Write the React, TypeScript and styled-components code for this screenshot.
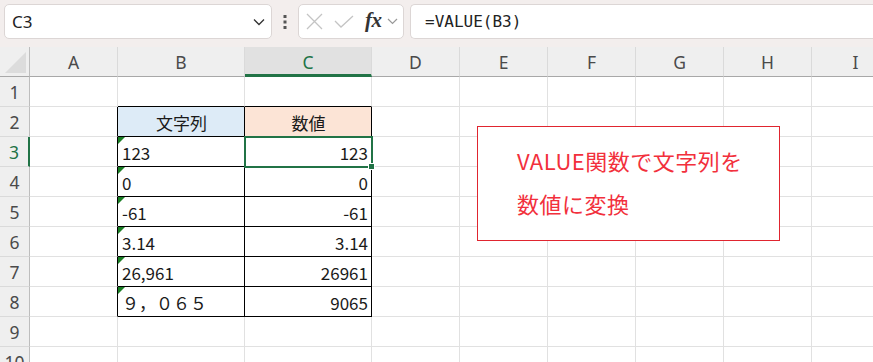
import styled, { createGlobalStyle, css } from 'styled-components';

const GlobalStyle = createGlobalStyle`
  html, body {
    margin: 0;
    padding: 0;
    background: #ffffff;
    overflow: hidden;
  }
  body {
    font-family: "Noto Sans", "Noto Sans CJK JP", sans-serif;
  }
`;

const COLS = ['A', 'B', 'C', 'D', 'E', 'F', 'G', 'H', 'I'];
const WIDTHS = [88, 127, 127, 88, 88, 88, 88, 88, 88];
const ROWS = [1, 2, 3, 4, 5, 6, 7, 8, 9, 10];
const GREEN = '#217346';

type CellData = { text: string; align: 'left' | 'center' | 'right'; fill?: string; flag?: boolean };

const data: Record<string, CellData> = {
  B2: { text: '文字列', align: 'center', fill: '#ddebf7' },
  C2: { text: '数値', align: 'center', fill: '#fce4d6' },
  B3: { text: '123', align: 'left', flag: true },
  C3: { text: '123', align: 'right' },
  B4: { text: '0', align: 'left', flag: true },
  C4: { text: '0', align: 'right' },
  B5: { text: '-61', align: 'left', flag: true },
  C5: { text: '-61', align: 'right' },
  B6: { text: '3.14', align: 'left', flag: true },
  C6: { text: '3.14', align: 'right' },
  B7: { text: '26,961', align: 'left', flag: true },
  C7: { text: '26961', align: 'right' },
  B8: { text: '９，０６５', align: 'left', flag: true },
  C8: { text: '9065', align: 'right' },
};

const inTable = (col: string, row: number) => (col === 'B' || col === 'C') && row >= 2 && row <= 8;

function App() {
  return (
    <>
      <GlobalStyle />
      <Page>
        <TopBar>
          <NameBox>
            <NameText>C3</NameText>
            <svg width="12" height="8" viewBox="0 0 12 8">
              <path d="M1 1.5 L6 6.5 L11 1.5" fill="none" stroke="#333" strokeWidth="1.3" />
            </svg>
          </NameBox>
          <Dots>
            <svg width="4" height="14" viewBox="0 0 4 14">
              <rect x="0.5" y="0" width="3" height="3" fill="#555" />
              <rect x="0.5" y="5.5" width="3" height="3" fill="#555" />
              <rect x="0.5" y="11" width="3" height="3" fill="#555" />
            </svg>
          </Dots>
          <FuncBox>
            <svg width="17" height="17" viewBox="0 0 17 17">
              <path d="M1 1 L16 16 M16 1 L1 16" stroke="#c4c4c4" strokeWidth="1.3" fill="none" />
            </svg>
            <svg width="20" height="13" viewBox="0 0 20 13">
              <path d="M1 6 L7 12 L19 1" stroke="#c4c4c4" strokeWidth="1.3" fill="none" />
            </svg>
            <Fx>fx</Fx>
            <svg width="11" height="7" viewBox="0 0 11 7">
              <path d="M1 1 L5.5 5.5 L10 1" fill="none" stroke="#999" strokeWidth="1.2" />
            </svg>
          </FuncBox>
          <FormulaBox>=VALUE(B3)</FormulaBox>
        </TopBar>

        <Sheet>
          <Corner>
            <CornerMark />
          </Corner>
          {COLS.map((c) => (
            <ColHead key={c} $active={c === 'C'}>
              {c}
            </ColHead>
          ))}
          {ROWS.map((r) => (
            <Row key={r}>
              <RowHead $active={r === 3}>{r}</RowHead>
              {COLS.map((c) => {
                const d = data[`${c}${r}`];
                const rightBlack = (c === 'A' && r >= 2 && r <= 8) || inTable(c, r);
                const bottomBlack = (c === 'B' || c === 'C') && r >= 1 && r <= 8;
                const selected = c === 'C' && r === 3;
                return (
                  <Cell
                    key={c}
                    $align={d?.align ?? 'left'}
                    $fill={d?.fill}
                    $rb={rightBlack}
                    $bb={bottomBlack}
                    $flag={!!d?.flag}
                    $selected={selected}
                  >
                    {d?.text}
                    {selected && <Handle />}
                  </Cell>
                );
              })}
            </Row>
          ))}

          <Shape>
            <ShapeText>
              VALUE関数で文字列を
              <br />
              数値に変換
            </ShapeText>
          </Shape>
        </Sheet>
      </Page>
    </>
  );
}

export default App;

const Page = styled.div`
  width: 873px;
  height: 362px;
  overflow: hidden;
  background: #ffffff;
`;

const TopBar = styled.div`
  height: 47px;
  box-sizing: border-box;
  padding: 4px 0 0 4px;
  background: #f3eeed;
  display: flex;
  align-items: flex-start;
`;

const boxBase = css`
  height: 35px;
  box-sizing: border-box;
  background: #ffffff;
  border: 1px solid #dcd6d5;
  border-radius: 5px;
  display: flex;
  align-items: center;
`;

const NameBox = styled.div`
  ${boxBase};
  width: 268px;
  padding: 0 6px 0 7px;
  justify-content: space-between;
`;

const NameText = styled.span`
  font-family: "Noto Sans", sans-serif;
  font-size: 17px;
  color: #222;
`;

const Dots = styled.div`
  width: 26px;
  height: 35px;
  display: flex;
  align-items: center;
  justify-content: center;
`;

const FuncBox = styled.div`
  ${boxBase};
  width: 106px;
  padding: 0 0 0 7px;

  & > svg:nth-child(1) {
    margin-right: 11px;
  }
  & > svg:nth-child(2) {
    margin-right: 11px;
  }
`;

const Fx = styled.span`
  font-family: "Liberation Serif", "DejaVu Serif", serif;
  font-style: italic;
  font-weight: bold;
  font-size: 21px;
  line-height: 1;
  color: #333;
  margin: -3px 5px 0 0;
  letter-spacing: -0.5px;
`;

const FormulaBox = styled.div`
  ${boxBase};
  flex: 1;
  margin-left: 6px;
  border-right: none;
  border-radius: 5px 0 0 5px;
  padding-left: 14px;
  font-family: "DejaVu Sans Mono", "Liberation Mono", monospace;
  font-size: 16px;
  color: #222;
`;

const Sheet = styled.div`
  position: relative;
  display: grid;
  grid-template-columns: 30px ${WIDTHS.map((w) => `${w}px`).join(' ')};
  grid-auto-rows: 30px;
`;

const Row = styled.div`
  display: contents;
`;

const headBase = css`
  box-sizing: border-box;
  background: #efefef;
  display: flex;
  align-items: center;
  justify-content: center;
  font-family: "Noto Sans", sans-serif;
  font-size: 17.5px;
  color: #4a4a4a;
`;

const Corner = styled.div`
  ${headBase};
  position: relative;
  border-right: 1px solid #bdbdbd;
  border-bottom: 1px solid #a8a8a8;
`;

const CornerMark = styled.div`
  position: absolute;
  right: 3px;
  bottom: 3px;
  width: 0;
  height: 0;
  border-left: 21px solid transparent;
  border-bottom: 21px solid #dcdcdc;
`;

const ColHead = styled.div<{ $active: boolean }>`
  ${headBase};
  padding-top: ${(p) => (p.$active ? '3px' : '1px')};
  border-right: 1px solid #dadada;
  border-bottom: ${(p) => (p.$active ? `3px solid ${GREEN}` : '1px solid #a8a8a8')};
  ${(p) =>
    p.$active &&
    css`
      background: #e1e1e1;
      color: ${GREEN};
    `}
`;

const RowHead = styled.div<{ $active: boolean }>`
  ${headBase};
  border-bottom: 1px solid #dadada;
  border-right: ${(p) => (p.$active ? `2px solid ${GREEN}` : '1px solid #bdbdbd')};
  ${(p) =>
    p.$active &&
    css`
      color: ${GREEN};
    `}
`;

const Cell = styled.div<{
  $align: 'left' | 'center' | 'right';
  $fill?: string;
  $rb: boolean;
  $bb: boolean;
  $flag: boolean;
  $selected: boolean;
}>`
  position: relative;
  box-sizing: border-box;
  display: flex;
  align-items: center;
  justify-content: ${(p) =>
    p.$align === 'center' ? 'center' : p.$align === 'right' ? 'flex-end' : 'flex-start'};
  padding: 2px 3px 0 4px;
  background: ${(p) => p.$fill ?? '#ffffff'};
  border-right: 1px solid ${(p) => (p.$rb ? '#000000' : '#e1e1e1')};
  border-bottom: 1px solid ${(p) => (p.$bb ? '#000000' : '#e1e1e1')};
  font-family: "Noto Sans CJK JP", sans-serif;
  font-size: 17px;
  color: #1a1a1a;
  white-space: nowrap;

  ${(p) =>
    p.$flag &&
    css`
      &::before {
        content: '';
        position: absolute;
        left: 0;
        top: 0;
        border-top: 7px solid #1a7f24;
        border-right: 7px solid transparent;
      }
    `}

  ${(p) =>
    p.$selected &&
    css`
      z-index: 1;
      &::after {
        content: '';
        position: absolute;
        left: -1px;
        top: -1px;
        right: -2px;
        bottom: -2px;
        border: 2px solid ${GREEN};
      }
    `}
`;

const Handle = styled.span`
  position: absolute;
  right: -4px;
  bottom: -4px;
  width: 5px;
  height: 5px;
  background: ${GREEN};
  border: 1px solid #ffffff;
  z-index: 2;
`;

const Shape = styled.div`
  position: absolute;
  left: 477px;
  top: 79px;
  width: 303px;
  height: 115px;
  box-sizing: border-box;
  background: #ffffff;
  border: 1px solid #e0252f;
  padding: 12px 0 0 39px;
  z-index: 3;
`;

const ShapeText = styled.div`
  font-family: "Noto Sans CJK JP", sans-serif;
  font-size: 22px;
  line-height: 43px;
  letter-spacing: 0.5px;
  color: #f2303c;
`;
